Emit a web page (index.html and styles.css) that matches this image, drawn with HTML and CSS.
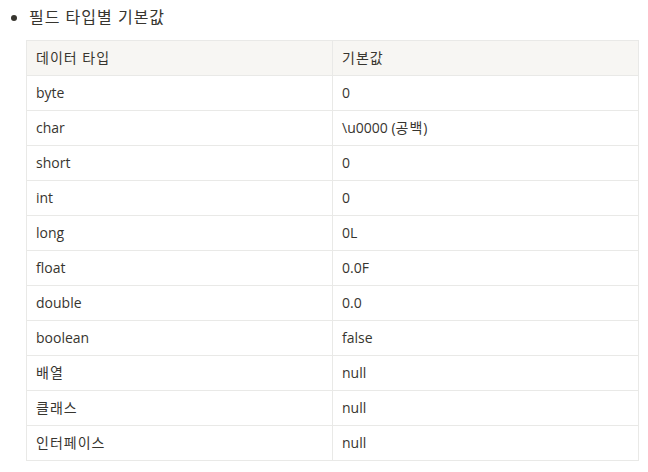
FILE: index.html
```html
<!DOCTYPE html>
<html lang="ko">
<head>
<meta charset="utf-8">
<link rel="stylesheet" href="styles.css">
</head>
<body>
<ul class="list">
  <li class="item">필드 타입별 기본값</li>
</ul>
<table class="tbl">
  <thead>
    <tr><th class="c1 ko">데이터 타입</th><th class="ko">기본값</th></tr>
  </thead>
  <tbody>
    <tr><td>byte</td><td>0</td></tr>
    <tr><td>char</td><td>\u0000 (<span class="ko">공백</span>)</td></tr>
    <tr><td>short</td><td>0</td></tr>
    <tr><td>int</td><td>0</td></tr>
    <tr><td>long</td><td>0L</td></tr>
    <tr><td>float</td><td>0.0F</td></tr>
    <tr><td>double</td><td>0.0</td></tr>
    <tr><td>boolean</td><td>false</td></tr>
    <tr><td class="ko">배열</td><td>null</td></tr>
    <tr><td class="ko">클래스</td><td>null</td></tr>
    <tr><td class="ko">인터페이스</td><td>null</td></tr>
  </tbody>
</table>
</body>
</html>
```

FILE: styles.css
```css
html, body {
  margin: 0;
  padding: 0;
  background: #ffffff;
}
body {
  font-family: "Open Sans", "Noto Sans CJK KR", sans-serif;
  color: #37352f;
}
.list {
  margin: 0;
  padding: 5px 0 0 29px;
  list-style: disc;
}
.item {
  font-size: 16px;
  letter-spacing: 1px;
  line-height: 24px;
  height: 24px;
}
.tbl {
  margin: 11px 0 0 26px;
  width: 613px;
  border-collapse: collapse;
  font-size: 14px;
}
.tbl th, .tbl td {
  border: 1px solid #e9e9e7;
  height: 35px;
  padding: 0 9px;
  text-align: left;
  font-weight: normal;
  box-sizing: border-box;
  line-height: 20px;
}
.tbl thead th {
  background: #f7f6f3;
}
.c1 {
  width: 306px;
}
.ko {
  letter-spacing: 1px;
}
```
